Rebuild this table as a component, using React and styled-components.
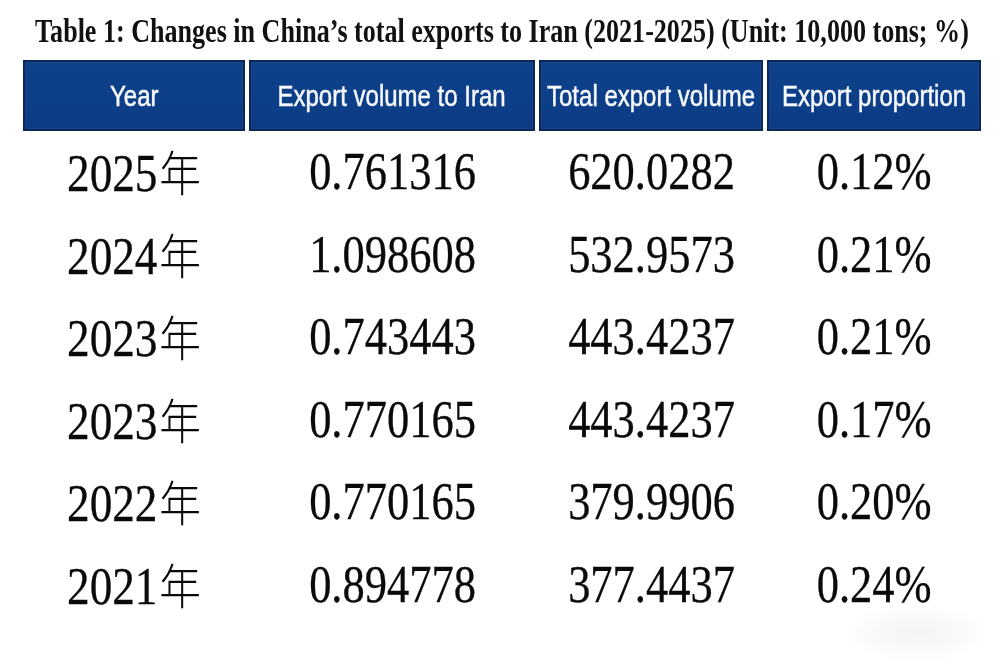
import React from "react";
import styled, { createGlobalStyle } from "styled-components";

const Global = createGlobalStyle`
  html, body { margin: 0; padding: 0; background: #ffffff; overflow: hidden; }
  #root { width: 1000px; height: 666px; }
`;

const Page = styled.div`
  position: relative;
  width: 1000px;
  height: 666px;
  box-sizing: border-box;
  padding: 15px 19px 0 23px;
  background: #ffffff;
  overflow: hidden;
`;

const TitleRow = styled.div`
  display: flex;
  justify-content: center;
  height: 33px;
  margin: 0 -23px 12px -23px;
  white-space: nowrap;
`;

const Title = styled.h1`
  margin: 0;
  display: inline-block;
  font-family: "Liberation Serif", "Times New Roman", serif;
  font-weight: 700;
  font-size: 33px;
  line-height: 33px;
  color: #111111;
  transform: scaleX(${(p) => p.$sx});
  transform-origin: center;
`;

const Grid = styled.div`
  display: grid;
  grid-template-columns: 222px 286px 224px 214px;
  column-gap: 4px;
`;

const HeadCell = styled.div`
  height: 71px;
  box-sizing: border-box;
  display: flex;
  align-items: center;
  justify-content: center;
  background: linear-gradient(180deg, #0f418b 0%, #0d3e88 60%, #0c3b83 100%);
  border: 2px solid #0a2856;
  box-shadow: inset 0 0 0 1px rgba(40, 80, 150, 0.35);
`;

const HeadText = styled.span`
  display: inline-block;
  white-space: nowrap;
  font-family: "Liberation Sans", Arial, sans-serif;
  font-size: 30px;
  line-height: 30px;
  color: #f7f9fc;
  -webkit-text-stroke: 0.5px #f7f9fc;
  transform: scaleX(${(p) => p.$sx});
  transform-origin: center;
`;

const BodyCell = styled.div`
  height: ${(p) => p.$h}px;
  display: flex;
  align-items: center;
  justify-content: center;
  white-space: nowrap;
`;

const BodyText = styled.span`
  display: inline-block;
  font-family: "Liberation Serif", "Times New Roman", serif;
  font-size: 52px;
  line-height: 82.6px;
  color: #0a0a0a;
  -webkit-text-stroke: 0.3px #0a0a0a;
  transform: scaleX(${(p) => p.$sx});
  transform-origin: center;
`;

const Nian = styled.span`
  font-family: "Noto Sans CJK SC", "Noto Sans CJK JP", sans-serif;
  font-weight: 300;
  font-size: 48px;
  -webkit-text-stroke: 0;
  margin-left: 2px;
`;

const Smudge = styled.div`
  position: absolute;
  left: 850px;
  top: 608px;
  width: 134px;
  height: 50px;
  border-radius: 50%;
  background: radial-gradient(ellipse at center, rgba(236, 235, 231, 0.6) 0%, rgba(242, 241, 238, 0.4) 50%, rgba(255, 255, 255, 0) 80%);
  filter: blur(5px);
  pointer-events: none;
`;

const headers = [
  { t: "Year", sx: 0.8 },
  { t: "Export volume to Iran", sx: 0.8 },
  { t: "Total export volume", sx: 0.8 },
  { t: "Export proportion", sx: 0.8 },
];

const rows = [
  ["2025", "0.761316", "620.0282", "0.12%"],
  ["2024", "1.098608", "532.9573", "0.21%"],
  ["2023", "0.743443", "443.4237", "0.21%"],
  ["2023", "0.770165", "443.4237", "0.17%"],
  ["2022", "0.770165", "379.9906", "0.20%"],
  ["2021", "0.894778", "377.4437", "0.24%"],
];

export default function App() {
  return (
    <Page>
      <Global />
      <TitleRow>
        <Title $sx={0.79}>
          Table 1: Changes in China’s total exports to Iran (2021-2025) (Unit: 10,000 tons; %)
        </Title>
      </TitleRow>
      <Grid>
        {headers.map((h) => (
          <HeadCell key={h.t}>
            <HeadText $sx={h.sx}>{h.t}</HeadText>
          </HeadCell>
        ))}
        {rows.map((r, i) =>
          r.map((c, j) => (
            <BodyCell key={`${i}-${j}`} $h={82.6}>
              <BodyText $sx={j === 0 ? 0.87 : 0.855}>
                {j === 0 ? (
                  <>
                    {c}
                    <Nian>年</Nian>
                  </>
                ) : (
                  c
                )}
              </BodyText>
            </BodyCell>
          ))
        )}
      </Grid>
      <Smudge />
    </Page>
  );
}
